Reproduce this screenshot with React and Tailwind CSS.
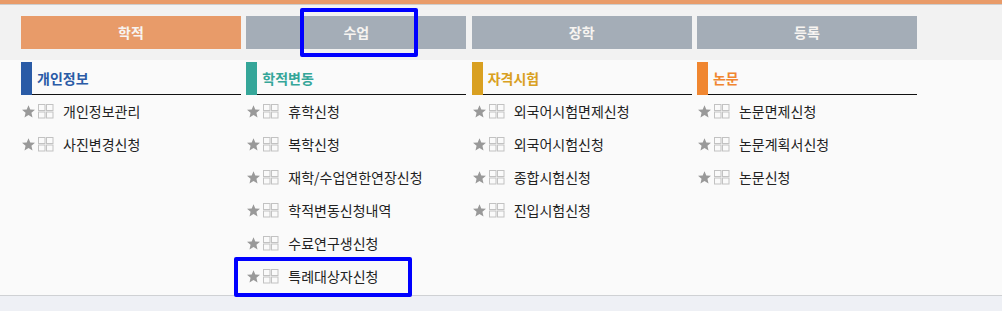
import React from "react";

const tabs = [
  { label: "학적", active: true },
  { label: "수업" },
  { label: "장학" },
  { label: "등록" },
];

const sections = [
  {
    title: "개인정보",
    bar: "bg-[#2a5ba6]",
    text: "text-[#2a5ba6]",
    items: ["개인정보관리", "사진변경신청"],
  },
  {
    title: "학적변동",
    bar: "bg-[#35a699]",
    text: "text-[#35a699]",
    items: ["휴학신청", "복학신청", "재학/수업연한연장신청", "학적변동신청내역", "수료연구생신청", "특례대상자신청"],
  },
  {
    title: "자격시험",
    bar: "bg-[#d9a021]",
    text: "text-[#d9a021]",
    items: ["외국어시험면제신청", "외국어시험신청", "종합시험신청", "진입시험신청"],
  },
  {
    title: "논문",
    bar: "bg-[#f08630]",
    text: "text-[#f08630]",
    items: ["논문면제신청", "논문계획서신청", "논문신청"],
  },
];

function Star() {
  return (
    <svg width="13" height="13" viewBox="0 0 24 23" className="shrink-0">
      <polygon
        points="12,0 15.3,7.6 24,8.4 17.4,14 19.4,22.5 12,18 4.6,22.5 6.6,14 0,8.4 8.7,7.6"
        fill="#999999"
      />
    </svg>
  );
}

function GridIcon() {
  return (
    <svg width="16" height="15" viewBox="0 0 16 15" className="shrink-0">
      <rect x="0.5" y="0.5" width="6.5" height="6" fill="none" stroke="#c2c2c2" />
      <rect x="8.5" y="0.5" width="6.5" height="6" fill="none" stroke="#c2c2c2" />
      <rect x="0.5" y="8" width="6.5" height="6" fill="none" stroke="#c2c2c2" />
      <rect x="8.5" y="8" width="6.5" height="6" fill="none" stroke="#c2c2c2" />
    </svg>
  );
}

export default function App() {
  const font = { fontFamily: '"Malgun Gothic", "Noto Sans CJK KR", sans-serif' };
  return (
    <div className="relative w-[1002px] h-[311px] flex flex-col bg-[#eef0f5] overflow-hidden" style={font}>
      <div className="h-[4px] bg-[#e99b69]" />
      <div className="h-px bg-[#cdcdcd]" />
      <div className="bg-[#f2f2f2] pt-[11px] pb-[11px] px-[21px]">
        <div className="grid grid-cols-[220px_220px_220px_220px] gap-x-[5.33px]">
          {tabs.map((t) => (
            <div
              key={t.label}
              className={`h-[33px] flex items-center justify-center text-[14px] font-bold text-[#f7f4f1] ${
                t.active ? "bg-[#e89b69]" : "bg-[#a4adb7]"
              }`}
            >
              {t.label}
            </div>
          ))}
        </div>
      </div>
      <div className="bg-[#fafafa] h-[236px] border-b border-[#cfd1d4] pt-[2px] px-[21px]">
        <div className="grid grid-cols-[220px_220px_220px_220px] gap-x-[5.33px]">
          {sections.map((s) => (
            <div key={s.title} className="flex flex-col">
              <div className="flex h-[33px]">
                <div className={`w-[11px] h-[33px] ${s.bar}`} />
                <div className={`flex-1 flex items-center pl-[5px] border-b border-[#111] text-[14px] font-bold ${s.text}`}>
                  {s.title}
                </div>
              </div>
              {s.items.map((it) => (
                <div key={it} className="h-[33px] flex items-center">
                  <div className="w-[17px] pl-px flex items-center">
                    <Star />
                  </div>
                  <div className="w-[25px] flex items-center">
                    <GridIcon />
                  </div>
                  <span className="text-[14px] text-[#222] whitespace-nowrap">{it}</span>
                </div>
              ))}
            </div>
          ))}
        </div>
      </div>
      <div className="absolute left-[300px] top-[8px] w-[118px] h-[49px] border-4 border-[#0000ff] rounded-[2px]" />
      <div className="absolute left-[234px] top-[257px] w-[178px] h-[40px] border-4 border-[#0000ff] rounded-[2px]" />
    </div>
  );
}
